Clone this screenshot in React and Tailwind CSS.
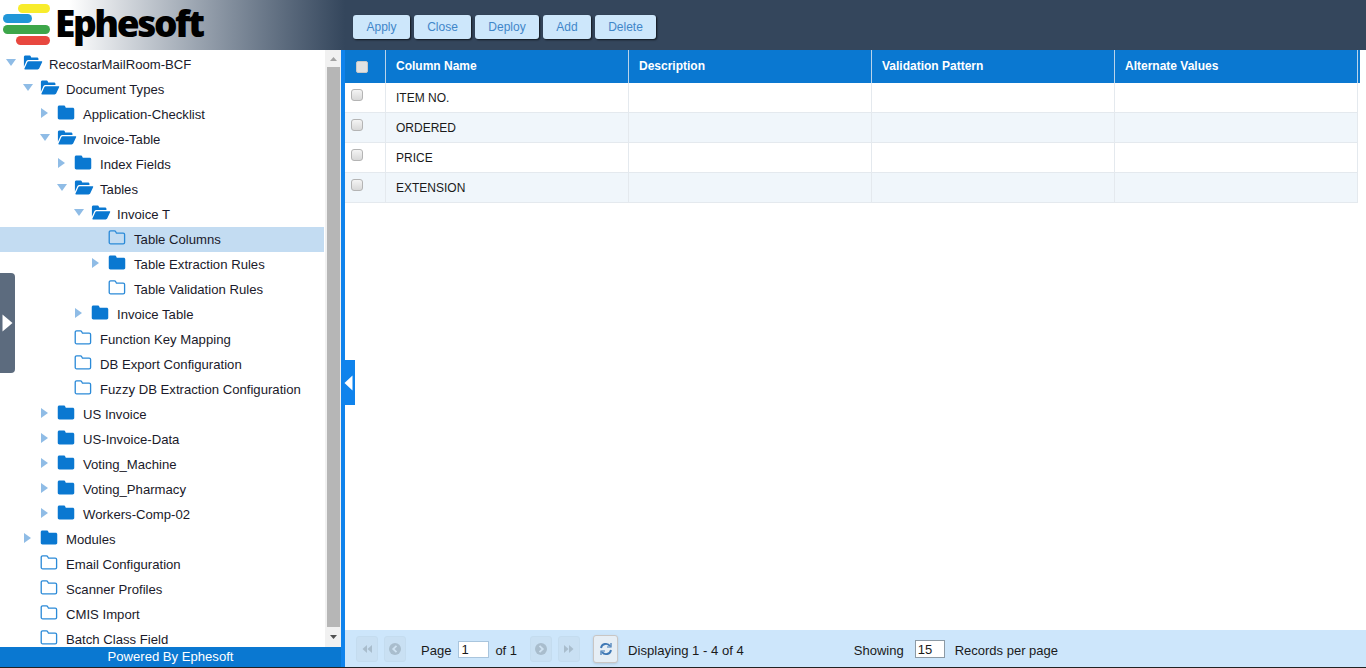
const T = ({ open }) => open ? (
  <svg width="10" height="7" viewBox="0 0 10 7" className="ml-[1px] mb-[2px] shrink-0"><path d="M0 0H10L5 7Z" fill="#8fbce6" /></svg>
) : (
  <svg width="7" height="10" viewBox="0 0 7 10" className="ml-[2px] mb-[1px] shrink-0"><path d="M0 0V10L7 5Z" fill="#8fbce6" /></svg>
);

const FolderSolid = () => (
  <svg width="18" height="15" viewBox="0 0 18 16"><path d="M2 0.5H6.5C7.5 0.5 8 1 8.4 2L8.8 2.8H16C17.1 2.8 17.8 3.5 17.8 4.6V13.6C17.8 14.7 17.1 15.4 16 15.4H2C0.9 15.4 0.2 14.7 0.2 13.6V2.3C0.2 1.2 0.9 0.5 2 0.5Z" fill="#0a78d1" /></svg>
);
const FolderLine = () => (
  <svg width="18" height="15" viewBox="0 0 18 16"><path d="M2.2 1H6.2C7 1 7.4 1.4 7.8 2.2L8.4 3.4H15.6C16.5 3.4 17.1 4 17.1 4.9V13.2C17.1 14.1 16.5 14.7 15.6 14.7H2.2C1.3 14.7 0.7 14.1 0.7 13.2V2.5C0.7 1.6 1.3 1 2.2 1Z" fill="none" stroke="#2b8ad8" strokeWidth="1.4" /></svg>
);
const FolderOpen = () => (
  <svg width="20" height="15" viewBox="0 0 20 16"><path d="M0.3 2C0.3 1 1 0.4 2 0.4H6C7 0.4 7.5 0.9 7.8 1.8L8.1 2.6H14.2C15.2 2.6 15.8 3.2 15.8 4.1V5.2H5.2C4 5.2 3.3 5.8 2.9 6.7L0.3 12.6Z" fill="#0a78d1" /><path d="M5.4 6.6H19.2C19.8 6.6 20 7 19.7 7.6L16.7 14.2C16.3 15 15.8 15.4 14.9 15.4H1.4C0.8 15.4 0.6 15 0.9 14.4L3.9 7.8C4.3 7 4.7 6.6 5.4 6.6Z" fill="#0a78d1" /></svg>
);

const tree = [
  [0, "open", "RecostarMailRoom-BCF"],
  [1, "open", "Document Types"],
  [2, "closed", "Application-Checklist"],
  [2, "open", "Invoice-Table"],
  [3, "closed", "Index Fields"],
  [3, "open", "Tables"],
  [4, "open", "Invoice T"],
  [5, "leaf", "Table Columns", true],
  [5, "closed", "Table Extraction Rules"],
  [5, "leaf", "Table Validation Rules"],
  [4, "closed", "Invoice Table"],
  [3, "leaf", "Function Key Mapping"],
  [3, "leaf", "DB Export Configuration"],
  [3, "leaf", "Fuzzy DB Extraction Configuration"],
  [2, "closed", "US Invoice"],
  [2, "closed", "US-Invoice-Data"],
  [2, "closed", "Voting_Machine"],
  [2, "closed", "Voting_Pharmacy"],
  [2, "closed", "Workers-Comp-02"],
  [1, "closed", "Modules"],
  [1, "leaf", "Email Configuration"],
  [1, "leaf", "Scanner Profiles"],
  [1, "leaf", "CMIS Import"],
  [1, "leaf", "Batch Class Field"],
];

const Row = ({ level, kind, label, selected }) => (
  <div className={`flex h-[25px] w-[324px] shrink-0 items-center pr-2 ${selected ? "bg-[#c3dcf2]" : ""}`} style={{ paddingLeft: 5 + level * 17 }}>
    <span className="flex w-[18px] shrink-0 items-center justify-start pb-[3px]">
      {kind === "open" && <T open />}
      {kind === "closed" && <T />}
    </span>
    <span className="flex w-[26px] shrink-0 items-center pb-[5px]">
      {kind === "open" ? <FolderOpen /> : kind === "closed" ? <FolderSolid /> : <FolderLine />}
    </span>
    <span className="whitespace-nowrap text-[13.15px] text-[#1a1a2a]">{label}</span>
  </div>
);

const Logo = () => (
  <div className="flex h-[50px] items-start pl-[3px]">
    <svg width="48" height="42" viewBox="0 0 48 42" className="mt-[4px] shrink-0">
      <rect x="15" y="0" width="32" height="9" rx="4.5" fill="#f8ec2c" />
      <rect x="0" y="10" width="29" height="9" rx="4.5" fill="#2196d8" />
      <rect x="0" y="21" width="47" height="9" rx="4.5" fill="#3da64a" />
      <rect x="13" y="32" width="34" height="9" rx="4.5" fill="#e8483f" />
    </svg>
    <span className="ml-[4px] font-['Open_Sans',sans-serif] text-[37px] leading-[45px] font-extrabold tracking-[-2.4px] text-black">Ephesoft</span>
  </div>
);

const btns = [["Apply", "w-[57px]"], ["Close", "w-[57px]"], ["Deploy", "w-[64px]"], ["Add", "w-[48px]"], ["Delete", "w-[61px]"]];

const Check = ({ header }) => (
  <span className={`block h-[12px] w-[12px] border ${header ? "rounded-[2px] border-[#c9c9c9] bg-[#e2e2e2]" : "rounded-[3px] border-[#b4b4b4] bg-gradient-to-b from-[#f4f4f4] to-[#d8d8d8]"}`} />
);

const cols = ["w-[243px]", "w-[243px]", "w-[243px]", "w-[243px]"];
const heads = ["Column Name", "Description", "Validation Pattern", "Alternate Values"];
const rows = ["ITEM NO.", "ORDERED", "PRICE", "EXTENSION"];

const PageBtn = ({ children, active }) => (
  <span className={`flex items-center justify-center rounded-[3px] border ${active ? "h-[28px] w-[25px] border-[#c9c6c4] bg-[#e6eef5] shadow-sm" : "h-[26px] w-[22px] border-[#c4dcef] bg-[#c9e0f3]"}`}>
    {children}
  </span>
);

const I = ({ d }) => <svg width="14" height="14" viewBox="0 0 14 14"><path d={d} fill="#a9bdcd" /></svg>;

const Circle = ({ dir }) => (
  <svg width="14" height="14" viewBox="0 0 14 14"><circle cx="7" cy="7" r="6" fill="#a9bdcd" /><path d={dir === "l" ? "M8.5 3.8L5.2 7L8.5 10.2" : "M5.5 3.8L8.8 7L5.5 10.2"} fill="none" stroke="#cfe2f2" strokeWidth="1.8" /></svg>
);

export default function App() {
  return (
    <div className="flex h-[668px] w-[1366px] flex-col overflow-hidden bg-white font-['Liberation_Sans',Arial,sans-serif]">
      <header className="flex h-[50px] shrink-0 bg-[#34465c]">
        <div className="w-[345px] shrink-0 bg-gradient-to-r from-white from-[20%] to-[#34465c]"><Logo /></div>
        <div className="ml-[8px] flex items-start gap-[4px] pt-[15px]">
          {btns.map(([b, w]) => (
            <button key={b} className={`h-[24px] ${w} rounded-[3px] bg-[#cde7fb] text-center text-[12px] text-[#3f86c9] shadow-[1px_1px_2px_rgba(0,0,0,0.7)]`}>{b}</button>
          ))}
        </div>
      </header>
      <div className="relative flex min-h-0 flex-1 border-b border-[#222]">
        <aside className="flex w-[341px] shrink-0 flex-col">
          <div className="flex min-h-0 flex-1">
            <div className="flex w-[325px] shrink-0 flex-col overflow-hidden pt-[2px]">
              {tree.map(([l, k, t, s]) => <Row key={t} level={l} kind={k} label={t} selected={s} />)}
            </div>
            <div className="flex w-[16px] flex-col items-center bg-[#f1f1f1]">
              <svg width="15" height="17" viewBox="0 0 15 17" className="shrink-0"><path d="M4 11L7.5 7L11 11Z" fill="#a3a3a3" /></svg>
              <div className="w-[13px] flex-1 bg-[#b6b6b6]" />
              <svg width="15" height="20" viewBox="0 0 15 20" className="shrink-0"><path d="M4 8L11 8L7.5 12Z" fill="#505050" /></svg>
            </div>
          </div>
          <div className="flex h-[20px] shrink-0 items-center justify-center bg-[#0a78d1] text-[13.1px] text-white">Powered By Ephesoft</div>
        </aside>
        <div className="w-[4px] shrink-0 bg-[#0f83ec]" />
        <main className="flex min-w-0 flex-1 flex-col">
          <div className="min-h-0 flex-1">
            <div className="flex h-[33px] w-[1015px] bg-[#0a78d1]">
              <div className="flex w-[41px] shrink-0 items-center border-r border-[#b9d3ea] pl-[11px]"><Check header /></div>
              {heads.map((h, i) => (
                <div key={h} className={`flex ${cols[i]} shrink-0 items-center border-r border-[#b9d3ea] pb-[2px] pl-[10px] text-[12px] font-bold text-white`}>{h}</div>
              ))}
            </div>
            {rows.map((r, idx) => (
              <div key={r} className={`flex h-[30px] w-[1013px] border-b border-[#e4e9ee] ${idx % 2 ? "bg-[#f0f6fb]" : "bg-white"}`}>
                <div className="flex w-[41px] shrink-0 border-r border-[#e4e9ee] pt-[6px] pl-[6px]"><Check /></div>
                {cols.map((c, i) => (
                  <div key={i} className={`flex ${c} shrink-0 items-center border-r border-[#e4e9ee] pl-[10px] text-[12px] text-[#1a1a1a]`}>{i === 0 ? r : ""}</div>
                ))}
              </div>
            ))}
          </div>
          <footer className="flex h-[37px] shrink-0 items-center bg-[#cde6fb] pl-[11px] text-[13px] text-[#1a1a1a]">
            <span className="flex gap-[6px]">
              <PageBtn><I d="M7 3V11L2.5 7ZM12 3V11L7.5 7Z" /></PageBtn>
              <PageBtn><Circle dir="l" /></PageBtn>
            </span>
            <span className="mt-[4px] ml-[15px]">Page</span>
            <input readOnly value="1" className="mt-[1px] ml-[7px] h-[17px] w-[31px] border border-[#a9c5dd] bg-white pl-[2px] text-[13px] leading-none outline-none" />
            <span className="mt-[4px] ml-[6px]">of 1</span>
            <span className="ml-[13px] flex gap-[6px]">
              <PageBtn><Circle dir="r" /></PageBtn>
              <PageBtn><I d="M2 3L6.5 7L2 11ZM7 3L11.5 7L7 11Z" /></PageBtn>
            </span>
            <span className="ml-[13px]">
              <PageBtn active>
                <svg width="14" height="14" viewBox="0 0 14 14" fill="none" stroke="#3f78b5" strokeWidth="1.9"><path d="M2 6A5 5 0 0 1 11 4M12 8A5 5 0 0 1 3 10" /><path d="M12 1V5H8M2 13V9H6" strokeWidth="1.2" /></svg>
              </PageBtn>
            </span>
            <span className="mt-[4px] ml-[10px] text-[13.1px]">Displaying 1 - 4 of 4</span>
            <span className="mt-[4px] ml-[110px]">Showing</span>
            <input readOnly value="15" className="mt-[1px] ml-[11px] h-[18px] w-[30px] border border-[#8c9aa5] bg-white pl-[2px] text-[13px] leading-none outline-none" />
            <span className="mt-[4px] ml-[10px]">Records per page</span>
          </footer>
        </main>
        <div className="absolute top-[223px] left-0 flex h-[100px] w-[15px] items-center justify-center rounded-r-[4px] bg-[#5c6b7e]">
          <svg width="11" height="18" viewBox="0 0 11 18"><path d="M0.5 0.5L10.5 9L0.5 17.5Z" fill="#fff" /></svg>
        </div>
        <div className="absolute top-[310px] left-[341px] flex h-[45px] w-[14px] items-center justify-center bg-[#0f83ec]">
          <svg width="9" height="16" viewBox="0 0 9 16"><path d="M8.5 0.5V15.5L0.5 8Z" fill="#fff" /></svg>
        </div>
      </div>
    </div>
  );
}
